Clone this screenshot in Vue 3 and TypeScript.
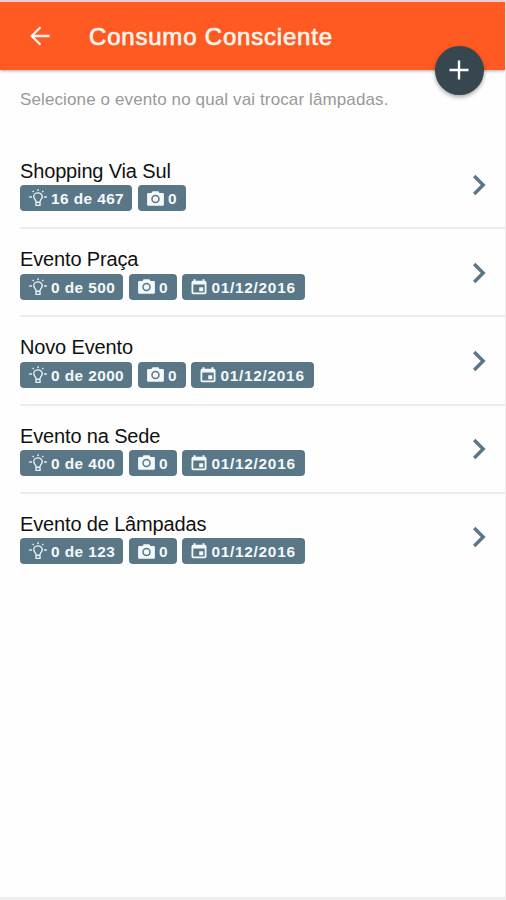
<script setup lang="ts">
interface EventItem {
  name: string
  lamps: string
  photos: number
  date?: string
}

const events: EventItem[] = [
  { name: 'Shopping Via Sul', lamps: '16 de 467', photos: 0 },
  { name: 'Evento Praça', lamps: '0 de 500', photos: 0, date: '01/12/2016' },
  { name: 'Novo Evento', lamps: '0 de 2000', photos: 0, date: '01/12/2016' },
  { name: 'Evento na Sede', lamps: '0 de 400', photos: 0, date: '01/12/2016' },
  { name: 'Evento de Lâmpadas', lamps: '0 de 123', photos: 0, date: '01/12/2016' },
]
</script>

<template>
  <div class="screen">
    <header class="bar">
      <svg class="back" viewBox="0 0 20 20">
        <path d="M10.5 1.2 1.7 10l8.8 8.8M2 10h17.7" />
      </svg>
      <h1 class="title">Consumo Consciente</h1>
      <button class="fab" aria-label="Adicionar">
        <svg viewBox="0 0 20 20"><path d="M10 .5v19M.5 10h19" /></svg>
      </button>
    </header>
    <p class="hint">Selecione o evento no qual vai trocar lâmpadas.</p>
    <ul class="list">
      <li v-for="event in events" :key="event.name" class="row">
        <div class="info">
          <h2 class="name">{{ event.name }}</h2>
          <div class="badges">
            <span class="badge lamps">
              <svg class="bulb" viewBox="0 0 18 18">
                <path d="M7 12.800c0-2-2.300-2.900-2.300-5.200a4.300 3.800 0 0 1 8.600 0c0 2.300-2.300 3.200-2.300 5.200v3.500H7zM7 13.200h4" />
                <path d="M9 .2v1.700M3.700 1.900l1 1.300M14.300 1.900l-1 1.300M.2 8h2.700M15.100 8h2.700" />
              </svg>
              <span>{{ event.lamps }}</span>
            </span>
            <span class="badge">
              <svg class="camera" viewBox="0 0 17 15">
                <path class="body" d="M1.300 1.900H4.500L5.600.3h5.800l1.100 1.600h3.200q1.200 0 1.200 1.200v10.500q0 1.200-1.200 1.200H1.300Q.1 14.800.1 13.600V3.100Q.1 1.900 1.300 1.900z" />
                <circle class="lens" cx="8.500" cy="8" r="3.500" />
              </svg>
              <span>{{ event.photos }}</span>
            </span>
            <span v-if="event.date" class="badge date">
              <svg class="calendar" viewBox="0 0 16 16">
                <path class="frame" fill-rule="evenodd" d="M2.500.3h2v1.500h7V.3h2v1.500h.3q1.700 0 1.700 1.700v10q0 1.700-1.700 1.700H2.200Q.5 15.200.5 13.500v-10q0-1.700 1.700-1.700h.3zM2.300 5.600v7.900h11.400V5.600z" />
                <path class="frame" d="M8.200 8.300h4v3.900h-4z" />
              </svg>
              <span>{{ event.date }}</span>
            </span>
          </div>
        </div>
        <svg class="chevron" viewBox="0 0 14 22"><path d="M2.200 2 11.200 11 2.200 20" /></svg>
      </li>
    </ul>
  </div>
</template>

<style>
body {
  margin: 0;
  background: #fff;
}
</style>

<style scoped>
.screen {
  box-sizing: border-box;
  height: 900px;
  overflow: hidden;
  background: #fefefe;
  border-top: 2px solid #ebcfd2;
  border-right: 1px solid #ebebeb;
  border-bottom: 3px solid #efefef;
  font-family: 'Liberation Sans', Arial, sans-serif;
}
.bar {
  position: relative;
  display: flex;
  align-items: center;
  box-sizing: border-box;
  height: 68px;
  padding: 0 0 0 29.5px;
  background: #ff5a22;
  box-shadow: 0 1px 3px rgba(0, 20, 40, 0.35);
}
.back {
  width: 20px;
  height: 20px;
  fill: none;
  stroke: #fff4ed;
  stroke-width: 2.3;
}
.title {
  margin: 2px 0 0 39.5px;
  color: #fff4ed;
  font-size: 24px;
  line-height: 30px;
  font-weight: 400;
  letter-spacing: 0.8px;
  -webkit-text-stroke: 0.7px #fff4ed;
}
.fab {
  position: absolute;
  top: 43.5px;
  right: 21.5px;
  display: flex;
  align-items: center;
  justify-content: center;
  width: 49px;
  height: 49px;
  padding: 0;
  border: 0;
  border-radius: 50%;
  background: #37474f;
  box-shadow: 0 2px 4px rgba(0, 0, 0, 0.35);
}
.fab svg {
  width: 20px;
  height: 20px;
  fill: none;
  stroke: #fff;
  stroke-width: 2.4;
}
.hint {
  margin: 20px 20px 0;
  color: #999;
  font-size: 17px;
  line-height: 20px;
  letter-spacing: 0.12px;
}
.list {
  margin: 31px 0 0;
  padding: 0 0 0 20px;
  list-style: none;
}
.row {
  display: flex;
  justify-content: space-between;
  box-sizing: border-box;
  height: 88.2px;
  padding: 18px 19px 0 0;
  border-bottom: 2px solid #ededed;
}
.row:last-child {
  border-bottom: 0;
}
.name {
  margin: 0;
  color: #111;
  font-size: 20px;
  line-height: 24px;
  font-weight: 400;
  letter-spacing: -0.15px;
}
.badges {
  display: flex;
  gap: 5.3px;
  margin-top: 2.4px;
}
.badge {
  display: flex;
  align-items: center;
  box-sizing: border-box;
  height: 26px;
  padding: 2px 9px 0;
  border-radius: 4px;
  background: #597786;
  color: #f4f9fb;
  font-size: 15.4px;
  line-height: 24px;
  font-weight: 700;
  letter-spacing: 0.5px;
}
.lamps {
  padding-right: 8.3px;
  letter-spacing: 0.42px;
}
.date {
  letter-spacing: 0.72px;
}
.badge svg {
  flex: none;
  margin-top: -2px;
}
.bulb {
  width: 18px;
  height: 18px;
  margin-right: 4px;
  fill: none;
  stroke: #eaf3f6;
  stroke-width: 1.35;
}
.camera {
  width: 17px;
  height: 15px;
  margin-right: 4.4px;
}
.calendar {
  width: 16px;
  height: 16px;
  margin-right: 4px;
}
.body,
.frame {
  fill: #f4f9fb;
}
.lens {
  fill: none;
  stroke: #597786;
  stroke-width: 1.5;
}
.chevron {
  width: 14px;
  height: 22px;
  margin-top: 14.5px;
  fill: none;
  stroke: #597786;
  stroke-width: 3.4;
}
</style>
